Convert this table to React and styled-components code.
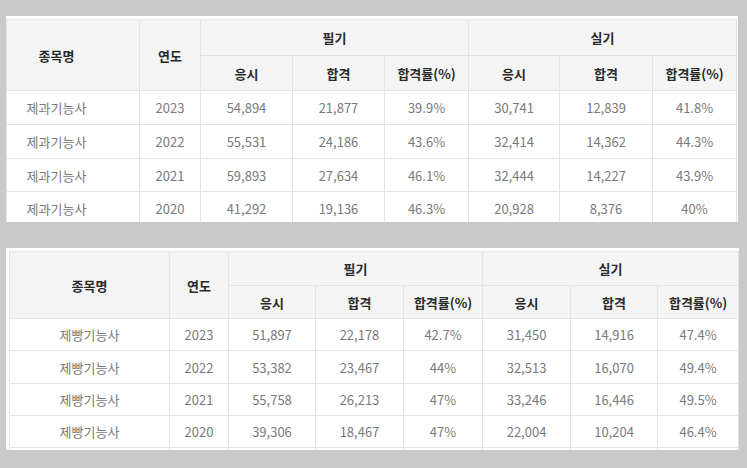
import React from 'react'
import styled, { createGlobalStyle } from 'styled-components'

const GlobalStyle = createGlobalStyle`
  body {
    margin: 0;
    background: #c9c9c9;
    font-family: "Noto Sans CJK KR", "Noto Sans", sans-serif;
  }
`

const tables = [
  {
    name: '제과기능사',
    cols: [133, 61, 92, 92, 84, 91, 93, 84],
    headHeights: [36, 35],
    rowHeights: [34, 34, 33, 34],
    leftName: true,
    rows: [
      ['2023', '54,894', '21,877', '39.9%', '30,741', '12,839', '41.8%'],
      ['2022', '55,531', '24,186', '43.6%', '32,414', '14,362', '44.3%'],
      ['2021', '59,893', '27,634', '46.1%', '32,444', '14,227', '43.9%'],
      ['2020', '41,292', '19,136', '46.3%', '20,928', '8,376', '40%'],
    ],
  },
  {
    name: '제빵기능사',
    cols: [160, 59, 87, 88, 79, 88, 87, 81],
    headHeights: [34, 33],
    rowHeights: [32, 33, 32, 32, 32],
    leftName: false,
    rows: [
      ['2023', '51,897', '22,178', '42.7%', '31,450', '14,916', '47.4%'],
      ['2022', '53,382', '23,467', '44%', '32,513', '16,070', '49.4%'],
      ['2021', '55,758', '26,213', '47%', '33,246', '16,446', '49.5%'],
      ['2020', '39,306', '18,467', '47%', '22,004', '10,204', '46.4%'],
      ['', '', '', '', '', '', ''],
    ],
  },
]

const Page = styled.div`
  display: flex;
  flex-direction: column;
  gap: 26px;
  padding: 16px 0 0 6px;
`

const Panel = styled.div`
  background: #fff;
  width: ${p => p.$w}px;
  height: ${p => p.$h}px;
  padding: 3px 0 0 ${p => p.$pl}px;
  box-sizing: border-box;
  overflow: hidden;
`

const Table = styled.table`
  border-collapse: collapse;
  table-layout: fixed;
  font-size: 13px;
  text-align: center;
`

const Row = styled.tr`
  height: ${p => p.$h}px;
`

const Th = styled.th`
  background: #f4f4f4;
  border: 1px solid #e3e3e3;
  color: #2a2a2a;
  font-weight: 700;
  padding: 0;
  padding-right: ${p => (p.$shift ? 33 : 0)}px;
`

const Td = styled.td`
  border: 1px solid #e3e3e3;
  color: #7a7a7a;
  padding: 0;
  padding-right: ${p => (p.$shift ? 33 : 0)}px;
  white-space: nowrap;
`

const subHeads = ['응시', '합격', '합격률(%)', '응시', '합격', '합격률(%)']

const ExamTable = ({ data }) => {
  const width = data.cols.reduce((a, b) => a + b, 0)
  return (
    <Table style={{ width }}>
      <colgroup>
        {data.cols.map((w, i) => (
          <col key={i} style={{ width: w }} />
        ))}
      </colgroup>
      <thead>
        <Row $h={data.headHeights[0]}>
          <Th rowSpan={2} $shift={data.leftName}>종목명</Th>
          <Th rowSpan={2}>연도</Th>
          <Th colSpan={3}>필기</Th>
          <Th colSpan={3}>실기</Th>
        </Row>
        <Row $h={data.headHeights[1]}>
          {subHeads.map((s, i) => (
            <Th key={i}>{s}</Th>
          ))}
        </Row>
      </thead>
      <tbody>
        {data.rowHeights.map((h, i) => {
          const r = data.rows[i]
          return (
            <Row key={i} $h={h}>
              <Td $shift={data.leftName}>{r[0] ? data.name : ''}</Td>
              {r.map((c, j) => (
                <Td key={j}>{c}</Td>
              ))}
            </Row>
          )
        })}
      </tbody>
    </Table>
  )
}

const App = () => {
  return (
    <Page>
      <GlobalStyle />
      <Panel $w={732} $h={206} $pl={0}>
        <ExamTable data={tables[0]} />
      </Panel>
      <Panel $w={733} $h={202} $pl={3}>
        <ExamTable data={tables[1]} />
      </Panel>
    </Page>
  )
}

export default App
